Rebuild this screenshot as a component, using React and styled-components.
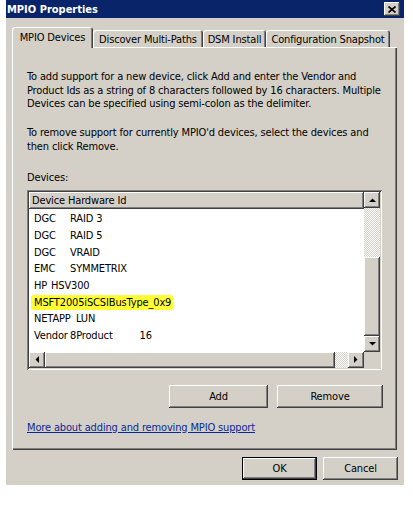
import styled, { createGlobalStyle, css } from 'styled-components';

const FACE = '#d4d0c8';
const LIGHT = '#ffffff';
const SHADOW = '#808080';
const DARK = '#404040';

const GlobalStyle = createGlobalStyle`
  body {
    margin: 0;
    background: #fff;
    font-family: "DejaVu Sans Condensed", "Liberation Sans", sans-serif;
    font-size: 11px;
    letter-spacing: -0.15px;
    color: #000;
  }
`;

const raised = css`
  box-shadow: inset -1px -1px ${DARK}, inset 1px 1px ${LIGHT},
    inset -2px -2px ${SHADOW}, inset 2px 2px ${FACE};
`;

const Window = styled.div`
  margin-left: 6px;
  width: 398px;
  height: 485px;
  background: ${FACE};
  display: flex;
  flex-direction: column;
`;

const TitleBar = styled.div`
  height: 18px;
  background: #0a246a;
  color: #fff;
  font-weight: bold;
  letter-spacing: 0;
  display: flex;
  align-items: center;
  justify-content: space-between;
  padding: 0 4px 0 1px;
`;

const CloseBtn = styled.div`
  width: 16px;
  height: 14px;
  background: ${FACE};
  ${raised};
  display: flex;
  align-items: center;
  justify-content: center;
`;

const TabStrip = styled.div`
  display: flex;
  align-items: flex-end;
  margin: 9px 0 0 6px;
  height: 20px;
  position: relative;
  z-index: 1;
`;

const Tab = styled.div`
  width: ${(p) => p.$w}px;
  height: ${(p) => (p.$active ? 21 : 17)}px;
  margin-bottom: ${(p) => (p.$active ? -1 : 0)}px;
  background: ${FACE};
  border-radius: 3px 3px 0 0;
  box-shadow: inset 1px 1px ${LIGHT}, inset -1px 0 ${DARK}, inset -2px 0 ${SHADOW};
  display: flex;
  align-items: center;
  justify-content: center;
  padding-top: ${(p) => (p.$active ? 0 : 1)}px;
  box-sizing: border-box;
  white-space: nowrap;
`;

const Panel = styled.div`
  margin-left: 6px;
  width: 385px;
  height: 403px;
  box-sizing: border-box;
  box-shadow: inset 1px 1px ${LIGHT}, inset -1px -1px ${DARK}, inset -2px -2px ${SHADOW};
  padding: 23px 14px 0 15px;
  display: flex;
  flex-direction: column;
`;

const Para = styled.div`
  line-height: 13.5px;
  white-space: nowrap;
  margin-top: ${(p) => p.$mt || 0}px;
`;

const ListBox = styled.div`
  margin-top: 5px;
  width: 355px;
  height: 180px;
  box-sizing: border-box;
  padding: 2px;
  box-shadow: inset 1px 1px ${SHADOW}, inset -1px -1px ${LIGHT},
    inset 2px 2px ${DARK}, inset -2px -2px ${FACE};
  display: grid;
  grid-template-columns: 1fr 16px;
  grid-template-rows: 1fr 16px;
`;

const ListBody = styled.div`
  background: #fff;
  overflow: hidden;
`;

const Header = styled.div`
  height: 17px;
  background: ${FACE};
  ${raised};
  padding-left: 3px;
  display: flex;
  align-items: center;
  margin-bottom: 2px;
`;

const Row = styled.div`
  height: 16.7px;
  display: flex;
  align-items: center;
  padding-left: 5px;
  white-space: pre;
`;

const Vendor = styled.span`
  display: inline-block;
  width: ${(p) => p.$w}px;
`;

const Marked = styled.span`
  background: #ffff33;
  padding: 1px 2px 1px 3px;
  margin-left: -3px;
  border-radius: 2px;
`;

const VScroll = styled.div`
  display: flex;
  flex-direction: column;
`;

const HScroll = styled.div`
  display: flex;
`;

const Track = styled.div`
  flex: ${(p) => (p.$size ? `0 0 ${p.$size}px` : 1)};
  background: repeating-conic-gradient(${FACE} 0 25%, #fff 0 50%) 0 0 / 2px 2px;
`;

const Thumb = styled.div`
  flex: 0 0 ${(p) => p.$size}px;
  background: ${FACE};
  ${raised};
`;

const ArrowBtn = styled.div`
  flex: 0 0 16px;
  width: 16px;
  height: 16px;
  background: ${FACE};
  ${raised};
  display: flex;
  align-items: center;
  justify-content: center;
`;

const Corner = styled.div`
  background: ${FACE};
`;

const ButtonRow = styled.div`
  display: flex;
  justify-content: flex-end;
  gap: ${(p) => p.$gap}px;
  margin: ${(p) => p.$margin};
`;

const Button = styled.div`
  width: ${(p) => p.$w}px;
  height: 23px;
  box-sizing: border-box;
  background: ${FACE};
  display: flex;
  align-items: center;
  justify-content: center;
  ${(p) =>
    p.$default
      ? css`
          border: 1px solid #000;
          ${raised};
        `
      : raised}
`;

const Link = styled.a`
  margin-top: 13px;
  color: #0a2896;
  text-decoration: underline;
  line-height: 14px;
  align-self: flex-start;
`;

const Arrow = ({ dir }) => {
  const pts = {
    up: '0,4 7,4 3.5,0.5',
    down: '0,0 7,0 3.5,3.5',
    left: '4,0 4,7 0.5,3.5',
    right: '0,0 0,7 3.5,3.5',
  }[dir];
  const vertical = dir === 'up' || dir === 'down';
  return (
    <svg width={vertical ? 7 : 4} height={vertical ? 4 : 7}>
      <polygon points={pts} fill="#000" />
    </svg>
  );
};

const devices = [
  { v: 'DGC', p: 'RAID 3', w: 36 },
  { v: 'DGC', p: 'RAID 5', w: 36 },
  { v: 'DGC', p: 'VRAID', w: 36 },
  { v: 'EMC', p: 'SYMMETRIX', w: 36 },
  { v: 'HP', p: 'HSV300', w: 17 },
  { v: 'MSFT2005iSCSIBusType_0x9', marked: true },
  { v: 'NETAPP', p: 'LUN', w: 42 },
  { v: 'Vendor', p: '8Product         16', w: 36 },
];

const tabs = [
  { label: 'MPIO Devices', w: 81, active: true },
  { label: 'Discover Multi-Paths', w: 110 },
  { label: 'DSM Install', w: 63 },
  { label: 'Configuration Snapshot', w: 124 },
];

export default function App() {
  return (
    <>
      <GlobalStyle />
      <Window>
        <TitleBar>
          <span>MPIO Properties</span>
          <CloseBtn>
            <svg width="8" height="7" viewBox="0 0 8 7">
              <path d="M0.5 0.5 L7.5 6.5 M7.5 0.5 L0.5 6.5" stroke="#000" strokeWidth="1.6" />
            </svg>
          </CloseBtn>
        </TitleBar>
        <TabStrip>
          {tabs.map((t) => (
            <Tab key={t.label} $w={t.w} $active={t.active}>
              {t.label}
            </Tab>
          ))}
        </TabStrip>
        <Panel>
          <Para>
            To add support for a new device, click Add and enter the Vendor and
            <br />
            Product Ids as a string of 8 characters followed by 16 characters. Multiple
            <br />
            Devices can be specified using semi-colon as the delimiter.
          </Para>
          <Para $mt={15.5}>
            To remove support for currently MPIO'd devices, select the devices and
            <br />
            then click Remove.
          </Para>
          <Para $mt={18}>Devices:</Para>
          <ListBox>
            <ListBody>
              <Header>Device Hardware Id</Header>
              {devices.map((d) => (
                <Row key={d.v}>
                  {d.marked ? (
                    <Marked>{d.v}</Marked>
                  ) : (
                    <>
                      <Vendor $w={d.w}>{d.v}</Vendor>
                      {d.p}
                    </>
                  )}
                </Row>
              ))}
            </ListBody>
            <VScroll>
              <ArrowBtn>
                <Arrow dir="up" />
              </ArrowBtn>
              <Track $size={49} />
              <Thumb $size={79} />
              <ArrowBtn>
                <Arrow dir="down" />
              </ArrowBtn>
            </VScroll>
            <HScroll>
              <ArrowBtn>
                <Arrow dir="left" />
              </ArrowBtn>
              <Thumb $size={290} />
              <Track />
              <ArrowBtn>
                <Arrow dir="right" />
              </ArrowBtn>
            </HScroll>
            <Corner />
          </ListBox>
          <ButtonRow $gap={9} $margin="15px 0 0 0">
            <Button $w={99}>Add</Button>
            <Button $w={106}>Remove</Button>
          </ButtonRow>
          <Link href="#">More about adding and removing MPIO support</Link>
        </Panel>
        <ButtonRow $gap={6} $margin="7px 6px 0 0">
          <Button $w={75} $default>
            OK
          </Button>
          <Button $w={75}>Cancel</Button>
        </ButtonRow>
      </Window>
    </>
  );
}
